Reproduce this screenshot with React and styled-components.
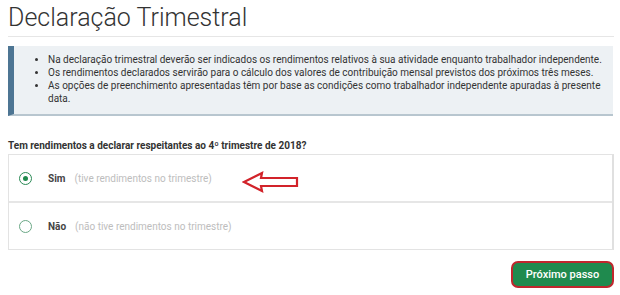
import React from 'react';
import styled, { createGlobalStyle } from 'styled-components';

const GlobalStyle = createGlobalStyle`
  html, body {
    margin: 0;
    padding: 0;
    background: #fff;
    font-family: Roboto, "Liberation Sans", Arial, sans-serif;
    color: #333;
  }
`;

const Page = styled.div`
  width: 620px;
  height: 295px;
  overflow: hidden;
  box-sizing: border-box;
  padding: 0 6px 0 8px;
`;

const Title = styled.h1`
  margin: 0;
  padding: 4px 0 5px 0;
  font-size: 25px;
  font-weight: 300;
  line-height: 27px;
  color: #333;
  border-bottom: 1px solid #e6e6e6;
`;

const InfoBox = styled.div`
  margin-top: 9px;
  background: #edf1f4;
  border-left: 6px solid #4d7593;
  border-bottom: 2px solid #b8c6cf;
  padding: 7px 5px 9px 0;
  margin-right: 1px;
`;

const InfoList = styled.ul`
  margin: 0;
  padding-left: 34px;
  font-size: 10px;
  line-height: 13px;
  color: #333;
`;

const Question = styled.div`
  margin-top: 23px;
  font-size: 10px;
  font-weight: 700;
  line-height: 13px;
  color: #333;
`;

const OptionsBox = styled.div`
  margin-top: 2px;
  border: 1px solid #e3e3e3;
  border-right: 2px solid #e0e0e0;
`;

const Option = styled.label`
  position: relative;
  display: flex;
  align-items: center;
  height: 46px;
  padding-left: 10px;
  font-size: 10px;
  border-top: ${p => (p.first ? 'none' : '2px solid #e6e6e6')};
`;

const Radio = styled.span`
  width: 11px;
  height: 11px;
  border-radius: 50%;
  border: 1px solid ${p => (p.checked ? '#2a8a55' : '#6aa886')};
  display: flex;
  align-items: center;
  justify-content: center;
  margin-right: 16px;

  &::after {
    content: '';
    display: ${p => (p.checked ? 'block' : 'none')};
    width: 5px;
    height: 5px;
    border-radius: 50%;
    background: #1e8a4c;
  }
`;

const OptionLabel = styled.span`
  font-weight: 700;
  color: #444;
  margin-right: 9px;
`;

const Hint = styled.span`
  color: #bdbdbd;
`;

const Arrow = styled.svg`
  position: absolute;
  left: 233px;
  top: 16px;
`;

const Footer = styled.div`
  display: flex;
  justify-content: flex-end;
  margin-top: 11px;
`;

const Button = styled.button`
  width: 103px;
  height: 27px;
  border: 2px solid #c0262d;
  border-radius: 7px;
  background: #1f8a4e;
  color: #fff;
  font-family: Roboto, "Liberation Sans", Arial, sans-serif;
  font-size: 11px;
  font-weight: 500;
  cursor: pointer;
`;

const App = () => (
  <>
    <GlobalStyle />
    <Page>
      <Title>Declaração Trimestral</Title>
      <InfoBox>
        <InfoList>
          <li>Na declaração trimestral deverão ser indicados os rendimentos relativos à sua atividade enquanto trabalhador independente.</li>
          <li>Os rendimentos declarados servirão para o cálculo dos valores de contribuição mensal previstos dos próximos três meses.</li>
          <li>As opções de preenchimento apresentadas têm por base as condições como trabalhador independente apuradas à presente data.</li>
        </InfoList>
      </InfoBox>
      <Question>Tem rendimentos a declarar respeitantes ao 4º trimestre de 2018?</Question>
      <OptionsBox>
        <Option first>
          <Radio checked />
          <OptionLabel>Sim</OptionLabel>
          <Hint>(tive rendimentos no trimestre)</Hint>
          <Arrow width="58" height="22" viewBox="0 0 58 22">
            <polygon
              points="2,11 20,2 19,7 55,7 55,15 19,15 20,20"
              fill="#fff"
              stroke="#d2232a"
              strokeWidth="2.2"
              strokeLinejoin="miter"
            />
          </Arrow>
        </Option>
        <Option>
          <Radio />
          <OptionLabel>Não</OptionLabel>
          <Hint>(não tive rendimentos no trimestre)</Hint>
        </Option>
      </OptionsBox>
      <Footer>
        <Button>Próximo passo</Button>
      </Footer>
    </Page>
  </>
);

export default App;
